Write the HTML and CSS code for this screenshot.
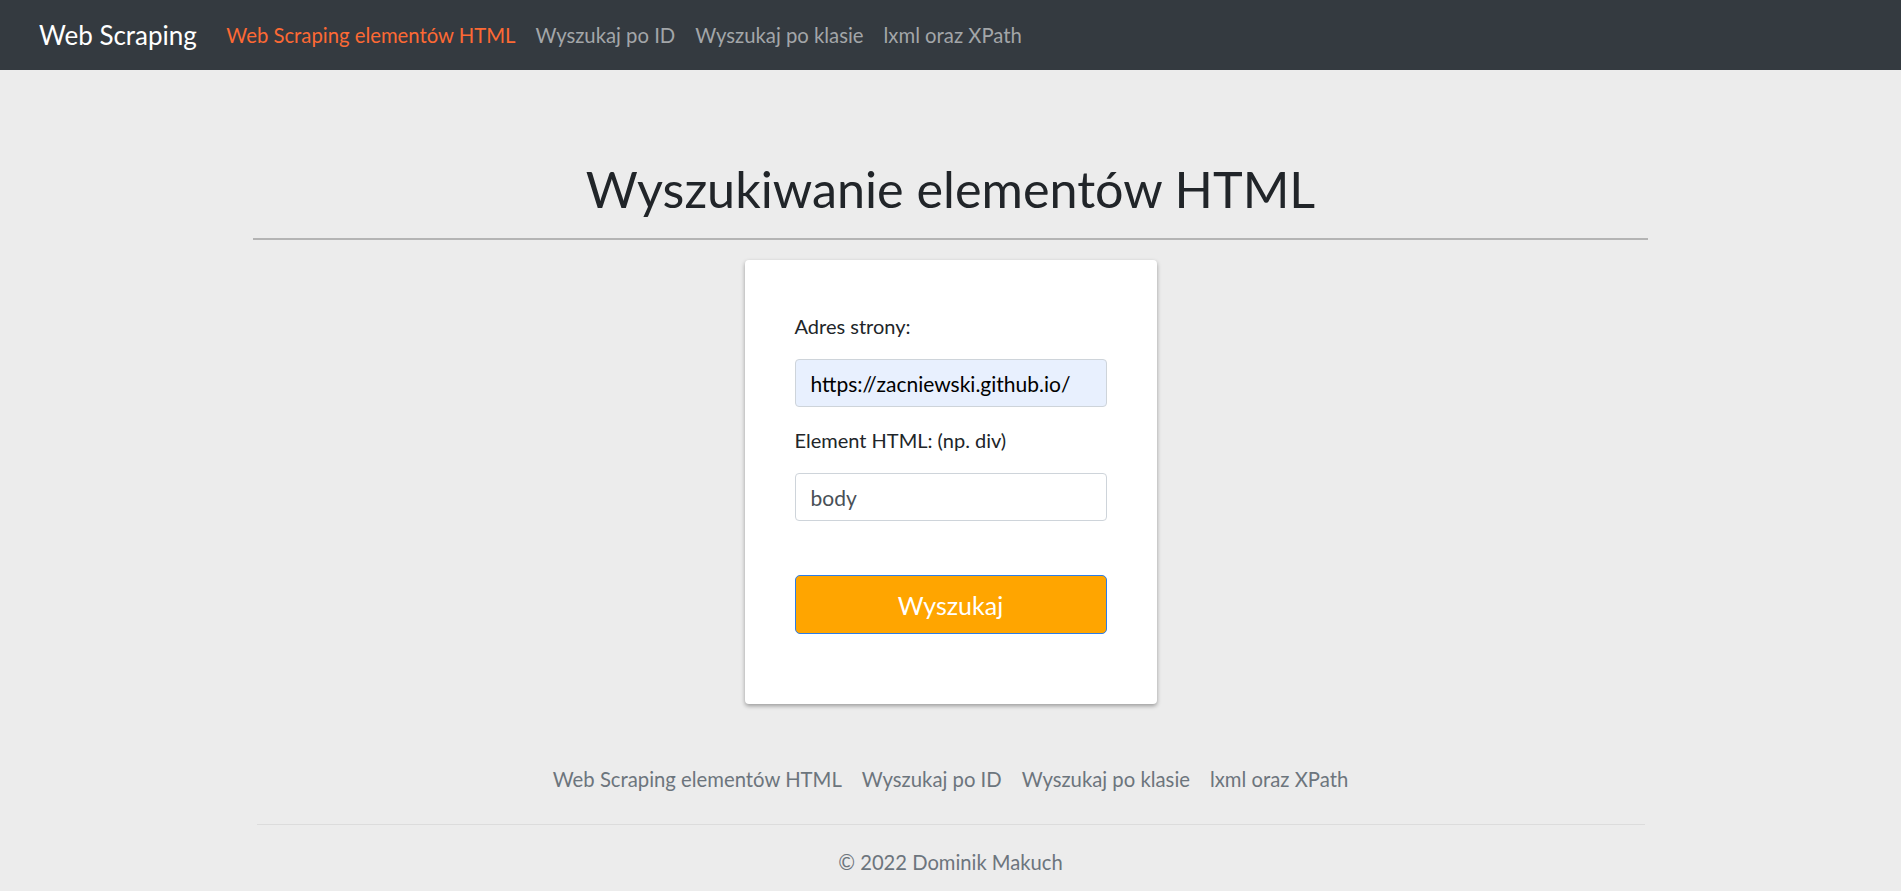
FILE: index.html
```html
<!DOCTYPE html>
<html lang="pl">
<head>
<meta charset="utf-8">
<title>Web Scraping</title>
<link rel="stylesheet" href="styles.css">
</head>
<body>
<nav class="navbar">
  <a class="brand" href="#">Web Scraping</a>
  <ul class="nav-links">
    <li><a class="nav-link active" href="#">Web Scraping elementów HTML</a></li>
    <li><a class="nav-link" href="#">Wyszukaj po ID</a></li>
    <li><a class="nav-link" href="#">Wyszukaj po klasie</a></li>
    <li><a class="nav-link" href="#">lxml oraz XPath</a></li>
  </ul>
</nav>
<main class="main">
  <h1 class="title">Wyszukiwanie elementów HTML</h1>
  <hr class="title-rule">
  <form class="card">
    <label class="label" for="url">Adres strony:</label>
    <input class="input input-filled" id="url" type="text" value="https://zacniewski.github.io/">
    <label class="label label-second" for="el">Element HTML: (np. div)</label>
    <input class="input" id="el" type="text" value="body">
    <button class="btn" type="button">Wyszukaj</button>
  </form>
</main>
<footer class="footer">
  <ul class="footer-links">
    <li><a href="#">Web Scraping elementów HTML</a></li>
    <li><a href="#">Wyszukaj po ID</a></li>
    <li><a href="#">Wyszukaj po klasie</a></li>
    <li><a href="#">lxml oraz XPath</a></li>
  </ul>
  <div class="footer-rule"></div>
  <p class="copyright">© 2022 Dominik Makuch</p>
</footer>
</body>
</html>
```
FILE: styles.css
```css
* { box-sizing: border-box; }
html, body { margin: 0; padding: 0; }
body {
  background: #ececec;
  font-family: Lato, "Open Sans", sans-serif;
  color: #212529;
}
a { text-decoration: none; }
ul { list-style: none; margin: 0; padding: 0; }

.navbar {
  height: 70px;
  background: #343a40;
  display: flex;
  align-items: center;
  padding-left: 39px;
}
.brand {
  color: #fff;
  font-size: 26px;
  margin-right: 19.5px;
}
.nav-links { display: flex; }
.nav-link {
  display: block;
  padding: 0 10px;
  font-size: 20.3px;
  color: #a3a6a9;
}
.nav-link.active { color: #fd6934; }

.main {
  display: flex;
  flex-direction: column;
  align-items: center;
  padding-top: 86px;
}
.title {
  margin: 0;
  font-size: 50.3px;
  font-weight: 400;
  line-height: 66px;
}
.title-rule {
  width: 1395px;
  margin: 16px 0 20px;
  border: 0;
  border-top: 2px solid #b4b4b4;
}
.card {
  width: 412px;
  background: #fff;
  border-radius: 4px;
  box-shadow: 0 2px 4px rgba(0,0,0,0.35);
  padding: 53px 50px 70px;
  display: flex;
  flex-direction: column;
}
.label {
  font-size: 20px;
  line-height: 27px;
  margin-bottom: 19px;
}
.label-second { margin-top: 20px; }
.input {
  height: 48px;
  border: 1px solid #ced4da;
  border-radius: 4px;
  padding: 0 15px;
  font-family: inherit;
  font-size: 21px;
  color: #495057;
  background: #fff;
}
.input-filled {
  background: #e8f0fe;
  color: #000;
}
.btn {
  margin-top: 54px;
  height: 59px;
  background: #ffa500;
  border: 1px solid #2b7de9;
  border-radius: 5px;
  color: #fff;
  font-family: inherit;
  font-size: 25px;
}

.footer {
  display: flex;
  flex-direction: column;
  align-items: center;
  padding-top: 60px;
}
.footer-links { display: flex; gap: 20px; }
.footer-links a {
  font-size: 20.3px;
  line-height: 30px;
  color: #6c757d;
}
.footer-rule {
  width: 1388px;
  height: 1px;
  background: #dcdcdc;
  margin-top: 30px;
}
.copyright {
  margin: 24px 0 16px;
  font-size: 20.2px;
  line-height: 26px;
  color: #6c757d;
}
```
